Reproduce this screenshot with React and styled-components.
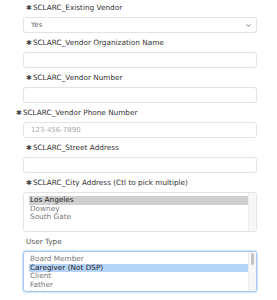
import React from 'react';
import styled, { createGlobalStyle } from 'styled-components';

const GlobalStyle = createGlobalStyle`
  html, body {
    margin: 0;
    padding: 0;
    background: #ffffff;
  }
  body {
    font-family: "DejaVu Sans", Verdana, sans-serif;
    font-size: 7px;
    color: #333;
  }
`

const Form = styled.div`
  width: 234px;
  padding: 3px 0 0 23px;
  display: flex;
  flex-direction: column;
`
const Field = styled.div`
  display: flex;
  flex-direction: column;
  margin-bottom: 5px;
`
const Label = styled.div`
  height: 10px;
  line-height: 10px;
  margin-bottom: 4px;
  margin-left: ${props => props.offset || 3}px;
  font-size: 7.3px;
  color: ${props => props.plain ? '#555' : '#333'};
  white-space: nowrap;
`
const Star = styled.span`
  font-size: 7px;
  margin-right: 1px;
  color: #444;
`
const Box = styled.div`
  position: relative;
  height: 16px;
  box-sizing: border-box;
  border: 1px solid #e3e3e3;
  border-radius: 3px;
  background: #fff;
  box-shadow: 0 0 1px rgba(0,0,0,0.04);
  display: flex;
  align-items: center;
  padding-left: 7px;
  color: ${props => props.placeholder ? '#aaa' : '#666'};
`
const Chevron = styled.svg`
  position: absolute;
  right: 5px;
  top: 5px;
  width: 5px;
  height: 5px;
`
const ListBox = styled.div`
  height: ${props => props.h}px;
  box-sizing: border-box;
  border: 1px solid ${props => props.focused ? '#a9c8ee' : '#e3e3e3'};
  box-shadow: ${props => props.focused ? '0 0 1px 1px rgba(120,170,235,0.35)' : 'none'};
  border-radius: 3px;
  background: #fff;
  display: flex;
  overflow: hidden;
`
const Options = styled.div`
  flex: 1;
  padding: 3px 0 0 5px;
  display: flex;
  flex-direction: column;
`
const Option = styled.div`
  height: 8.7px;
  line-height: 8.7px;
  padding-left: 1px;
  font-size: 7.3px;
  white-space: nowrap;
  color: ${props => props.selected ? '#222' : '#777'};
  background: ${props => props.selected ? (props.focused ? '#b6d3f8' : '#cfcfcf') : 'transparent'};
`
const Track = styled.div`
  width: 7px;
  background: #f6f6f6;
  border-left: 1px solid #ececec;
  display: flex;
  justify-content: center;
  padding-top: 1px;
`
const Thumb = styled.div`
  width: 3px;
  height: 12px;
  border-radius: 2px;
  background: #c3c3c3;
`

const Req = ({children, offset}) => (
  <Label offset={offset}><Star>✱</Star>{children}</Label>
)

const App = () => {
  return (
    <>
      <GlobalStyle />
      <Form>
        <Field>
          <Req>SCLARC_Existing Vendor</Req>
          <Box>
            Yes
            <Chevron viewBox="0 0 10 10">
              <path d="M1.5 3 L5 6.5 L8.5 3" fill="none" stroke="#555" strokeWidth="1.8" />
            </Chevron>
          </Box>
        </Field>
        <Field>
          <Req>SCLARC_Vendor Organization Name</Req>
          <Box />
        </Field>
        <Field>
          <Req>SCLARC_Vendor Number</Req>
          <Box />
        </Field>
        <Field>
          <Req offset={-7}>SCLARC_Vendor Phone Number</Req>
          <Box placeholder>123-456-7890</Box>
        </Field>
        <Field>
          <Req>SCLARC_Street Address</Req>
          <Box />
        </Field>
        <Field>
          <Req>SCLARC_City Address (Ctl to pick multiple)</Req>
          <ListBox h={40}>
            <Options>
              <Option selected>Los Angeles</Option>
              <Option>Downey</Option>
              <Option>South Gate</Option>
            </Options>
            <Track />
          </ListBox>
        </Field>
        <Field>
          <Label plain offset={0}>User Type</Label>
          <ListBox h={41} focused>
            <Options>
              <Option>Board Member</Option>
              <Option selected focused>Caregiver (Not DSP)</Option>
              <Option>Client</Option>
              <Option>Father</Option>
              <Option>Mother</Option>
            </Options>
            <Track>
              <Thumb />
            </Track>
          </ListBox>
        </Field>
      </Form>
    </>
  );
}

export default App;
